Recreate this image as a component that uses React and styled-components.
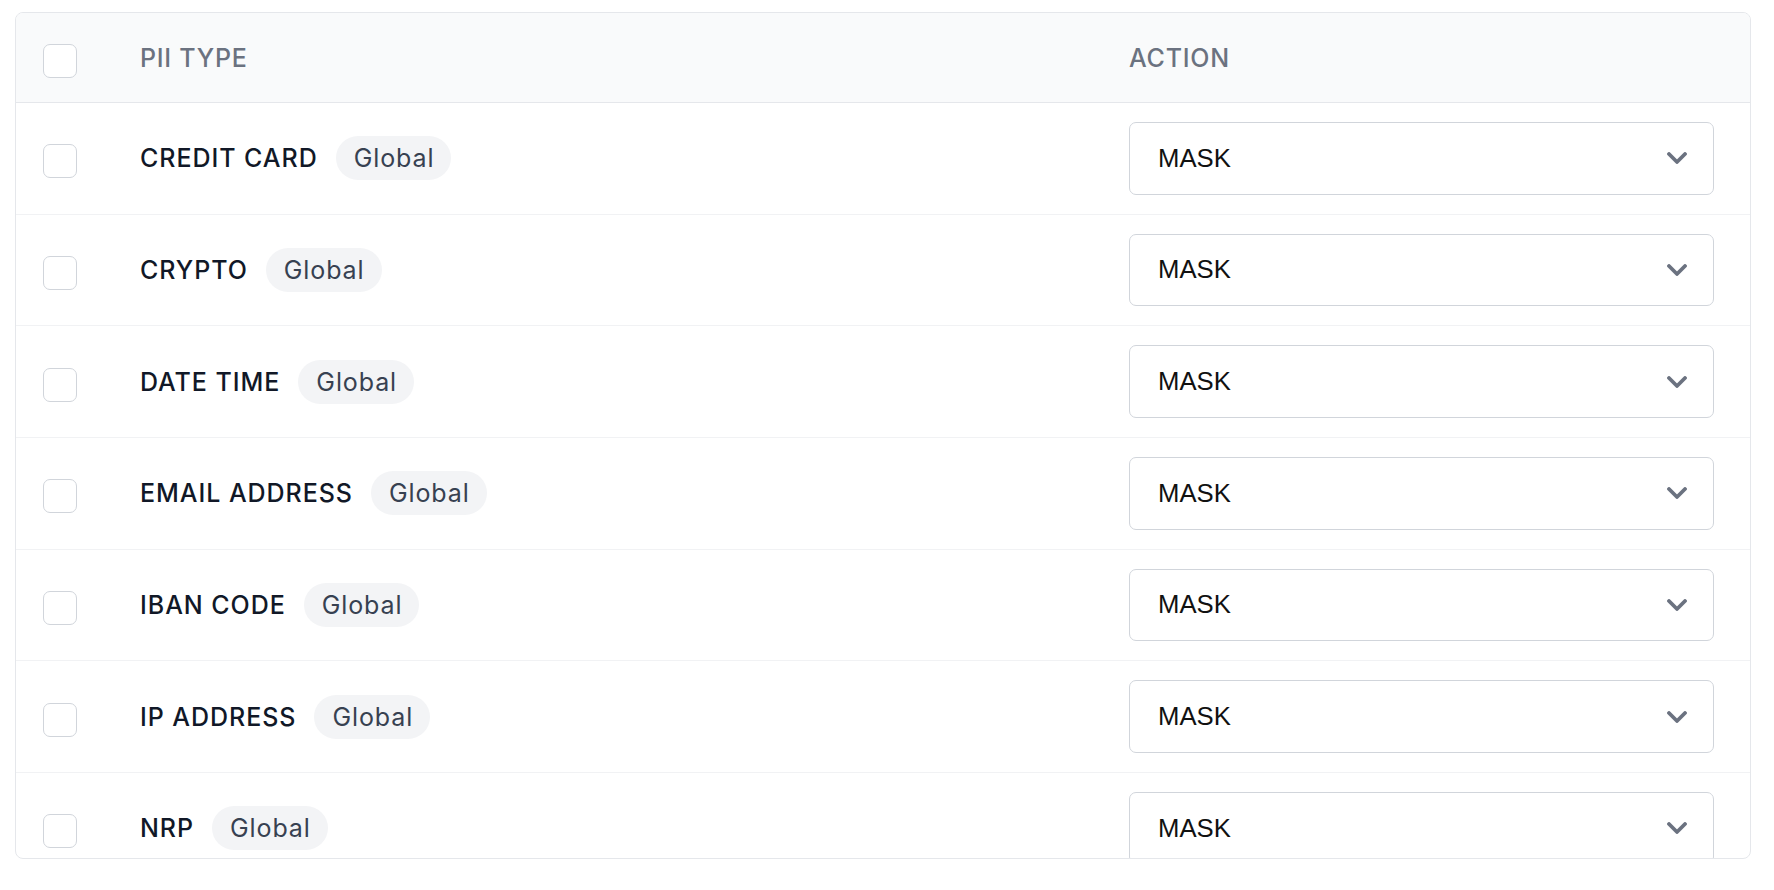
import React from "react";
import styled, { createGlobalStyle } from "styled-components";

const GlobalStyle = createGlobalStyle`
  body {
    margin: 0;
    background: #ffffff;
    font-family: Inter, "Noto Sans", sans-serif;
  }
`;

const piiTypes = [
  "CREDIT CARD",
  "CRYPTO",
  "DATE TIME",
  "EMAIL ADDRESS",
  "IBAN CODE",
  "IP ADDRESS",
  "NRP",
];

const App = () => {
  return (
    <Page>
      <GlobalStyle />
      <TableCard>
        <HeaderRow>
          <CheckCell>
            <Checkbox />
          </CheckCell>
          <HeaderLabel>PII TYPE</HeaderLabel>
          <ActionCell>
            <HeaderLabel>ACTION</HeaderLabel>
          </ActionCell>
        </HeaderRow>
        {piiTypes.map((type) => (
          <BodyRow key={type}>
            <CheckCell>
              <Checkbox />
            </CheckCell>
            <TypeCell>
              <TypeName>{type}</TypeName>
              <Badge>Global</Badge>
            </TypeCell>
            <ActionCell>
              <SelectBox>
                <span>MASK</span>
                <svg width="20" height="12" viewBox="0 0 20 12" fill="none">
                  <path
                    d="M2 2 L10 10 L18 2"
                    stroke="#6b7280"
                    strokeWidth="3.8"
                    strokeLinecap="round"
                    strokeLinejoin="round"
                  />
                </svg>
              </SelectBox>
            </ActionCell>
          </BodyRow>
        ))}
      </TableCard>
    </Page>
  );
};

export default App;

const Page = styled.div`
  padding: 12px 23px 0 15px;
`;

const TableCard = styled.div`
  box-sizing: border-box;
  height: 847px;
  border: 1px solid #e5e7eb;
  border-radius: 8px;
  overflow: hidden;
  background: #ffffff;
`;

const Row = styled.div`
  display: grid;
  grid-template-columns: 124px 1fr 621px;
  align-items: center;
`;

const HeaderRow = styled(Row)`
  height: 89px;
  background: #f9fafb;
  border-bottom: 1px solid #e5e7eb;
`;

const BodyRow = styled(Row)`
  height: 110.65px;
  border-bottom: 1px solid #f1f2f4;
`;

const CheckCell = styled.div`
  display: flex;
  padding-left: 27px;
  padding-top: 6px;
`;

const Checkbox = styled.span`
  box-sizing: border-box;
  width: 34px;
  height: 34px;
  border: 1.5px solid #d1d5db;
  border-radius: 7px;
  background: #ffffff;
`;

const HeaderLabel = styled.div`
  font-size: 25px;
  font-weight: 500;
  color: #6b7280;
  letter-spacing: 0.03em;
`;

const TypeCell = styled.div`
  display: flex;
  align-items: center;
  gap: 18px;
`;

const TypeName = styled.span`
  font-size: 25px;
  font-weight: 500;
  color: #111827;
  letter-spacing: 0.95px;
`;

const Badge = styled.span`
  display: inline-flex;
  align-items: center;
  height: 44px;
  padding: 0 17px 0 18px;
  border-radius: 22px;
  background: #f3f4f6;
  color: #374151;
  font-size: 25px;
  font-weight: 400;
  letter-spacing: 0.9px;
`;

const ActionCell = styled.div`
  padding-right: 36px;
`;

const SelectBox = styled.div`
  box-sizing: border-box;
  display: flex;
  align-items: center;
  justify-content: space-between;
  height: 72.65px;
  padding: 0 26px 0 28px;
  border: 1.5px solid #d1d5db;
  border-radius: 7px;
  background: #ffffff;
  font-family: "Liberation Sans", Arial, sans-serif;
  font-size: 25.7px;
  color: #111111;
`;
